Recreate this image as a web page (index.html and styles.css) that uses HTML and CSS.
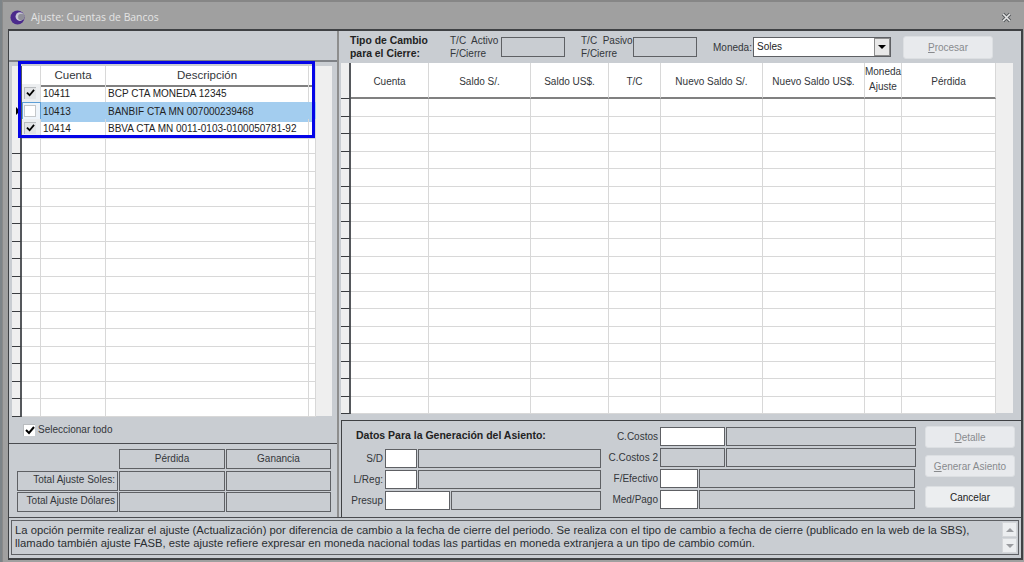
FILE: index.html
```html
<!DOCTYPE html>
<html lang="es">
<head>
    <meta charset="UTF-8">
    <meta name="viewport" content="width=device-width, initial-scale=1.0">
    <title>Ajuste: Cuentas de Bancos</title>
    <link rel="stylesheet" href="styles.css">
</head>
<body>

    <div id="window">
        <div id="titlebar">
            <svg class="app-icon" width="15" height="15" viewBox="0 0 16 16">
                <circle cx="8" cy="8" r="7.5" fill="#4b2a8c"/>
                <circle cx="10.5" cy="7" r="4.6" fill="#c9c9d6"/>
                <circle cx="12" cy="7.5" r="3.4" fill="#8f8f99"/>
            </svg>
            <span class="title-text">Ajuste: Cuentas de Bancos</span>
            <svg class="close-icon" width="11" height="11" viewBox="0 0 11 11">
                <path d="M2 2 L9 9 M9 2 L2 9" stroke="#55585c" stroke-width="3.4"/>
                <path d="M2 2 L9 9 M9 2 L2 9" stroke="#e6e6e6" stroke-width="1.6"/>
            </svg>
        </div>

        <div id="panel">
            <div id="main">
                <div id="left">
                    <div class="left-top"></div>

                    <div id="accounts">
                        <div class="lrow lhead"><span class="ind"></span><span></span><span>Cuenta</span><span>Descripción</span><span></span></div>
                        <div class="lrow"><span class="ind"></span><span class="chk-cell"><span class="chk"><svg width="9" height="8" viewBox="0 0 10 9"><path d="M1 4 L4 7 L9 1" fill="none" stroke="#000" stroke-width="2"/></svg></span></span><span class="code">10411</span><span class="desc">BCP CTA MONEDA 12345</span><span></span></div>
                        <div class="lrow selected"><span class="ind"><i class="arrow"></i></span><span class="chk-cell"><span class="chk blank"></span></span><span class="code">10413</span><span class="desc">BANBIF CTA MN 007000239468</span><span></span></div>
                        <div class="lrow"><span class="ind"></span><span class="chk-cell"><span class="chk"><svg width="9" height="8" viewBox="0 0 10 9"><path d="M1 4 L4 7 L9 1" fill="none" stroke="#000" stroke-width="2"/></svg></span></span><span class="code">10414</span><span class="desc">BBVA CTA MN 0011-0103-0100050781-92</span><span></span></div>
                        <div class="lrow"><span class="ind"></span><span></span><span></span><span></span><span></span></div>
                        <div class="lrow"><span class="ind"></span><span></span><span></span><span></span><span></span></div>
                        <div class="lrow"><span class="ind"></span><span></span><span></span><span></span><span></span></div>
                        <div class="lrow"><span class="ind"></span><span></span><span></span><span></span><span></span></div>
                        <div class="lrow"><span class="ind"></span><span></span><span></span><span></span><span></span></div>
                        <div class="lrow"><span class="ind"></span><span></span><span></span><span></span><span></span></div>
                        <div class="lrow"><span class="ind"></span><span></span><span></span><span></span><span></span></div>
                        <div class="lrow"><span class="ind"></span><span></span><span></span><span></span><span></span></div>
                        <div class="lrow"><span class="ind"></span><span></span><span></span><span></span><span></span></div>
                        <div class="lrow"><span class="ind"></span><span></span><span></span><span></span><span></span></div>
                        <div class="lrow"><span class="ind"></span><span></span><span></span><span></span><span></span></div>
                        <div class="lrow"><span class="ind"></span><span></span><span></span><span></span><span></span></div>
                        <div class="lrow"><span class="ind"></span><span></span><span></span><span></span><span></span></div>
                        <div class="lrow"><span class="ind"></span><span></span><span></span><span></span><span></span></div>
                        <div class="lrow"><span class="ind"></span><span></span><span></span><span></span><span></span></div>
                        <div class="lrow"><span class="ind"></span><span></span><span></span><span></span><span></span></div>
                        <div id="highlight"></div>
                    </div>

                    <div class="select-all">
                        <span class="chk white"><svg width="10" height="9" viewBox="0 0 10 9"><path d="M1 4 L4 7 L9 1" fill="none" stroke="#000" stroke-width="2"/></svg></span>
                        <span>Seleccionar todo</span>
                    </div>

                    <div class="totals">
                        <span></span>
                        <div class="box center">Pérdida</div>
                        <div class="box center">Ganancia</div>
                        <div class="box right-text">Total Ajuste Soles:</div>
                        <div class="box"></div>
                        <div class="box"></div>
                        <div class="box right-text">Total Ajuste Dólares</div>
                        <div class="box"></div>
                        <div class="box"></div>
                    </div>
                </div>

                <div class="split"></div>

                <div id="right">
                    <div class="toolbar">
                        <div class="tc-title">Tipo de Cambio<br>para el Cierre:</div>
                        <div class="tc-label tc-first">T/C&nbsp; Activo<br>F/Cierre</div>
                        <div class="box tc-box"></div>
                        <div class="tc-label tc-second">T/C&nbsp; Pasivo<br>F/Cierre</div>
                        <div class="box tc-box"></div>
                        <div class="moneda-label">Moneda:</div>
                        <div class="combo">
                            <span class="combo-text">Soles</span>
                            <span class="combo-btn"><i></i></span>
                        </div>
                        <button class="btn btn-off btn-proc"><u>P</u>rocesar</button>
                    </div>

                    <div id="balances">
                        <div class="rrow rhead"><span class="ind"></span><span>Cuenta</span><span>Saldo S/.</span><span>Saldo US$.</span><span>T/C</span><span>Nuevo Saldo S/.</span><span>Nuevo Saldo US$.</span><span class="two-line">Moneda<br>Ajuste</span><span>Pérdida</span></div>
                        <div class="rrow"><span class="ind"></span><span></span><span></span><span></span><span></span><span></span><span></span><span></span><span></span></div>
                        <div class="rrow"><span class="ind"></span><span></span><span></span><span></span><span></span><span></span><span></span><span></span><span></span></div>
                        <div class="rrow"><span class="ind"></span><span></span><span></span><span></span><span></span><span></span><span></span><span></span><span></span></div>
                        <div class="rrow"><span class="ind"></span><span></span><span></span><span></span><span></span><span></span><span></span><span></span><span></span></div>
                        <div class="rrow"><span class="ind"></span><span></span><span></span><span></span><span></span><span></span><span></span><span></span><span></span></div>
                        <div class="rrow"><span class="ind"></span><span></span><span></span><span></span><span></span><span></span><span></span><span></span><span></span></div>
                        <div class="rrow"><span class="ind"></span><span></span><span></span><span></span><span></span><span></span><span></span><span></span><span></span></div>
                        <div class="rrow"><span class="ind"></span><span></span><span></span><span></span><span></span><span></span><span></span><span></span><span></span></div>
                        <div class="rrow"><span class="ind"></span><span></span><span></span><span></span><span></span><span></span><span></span><span></span><span></span></div>
                        <div class="rrow"><span class="ind"></span><span></span><span></span><span></span><span></span><span></span><span></span><span></span><span></span></div>
                        <div class="rrow"><span class="ind"></span><span></span><span></span><span></span><span></span><span></span><span></span><span></span><span></span></div>
                        <div class="rrow"><span class="ind"></span><span></span><span></span><span></span><span></span><span></span><span></span><span></span><span></span></div>
                        <div class="rrow"><span class="ind"></span><span></span><span></span><span></span><span></span><span></span><span></span><span></span><span></span></div>
                        <div class="rrow"><span class="ind"></span><span></span><span></span><span></span><span></span><span></span><span></span><span></span><span></span></div>
                        <div class="rrow"><span class="ind"></span><span></span><span></span><span></span><span></span><span></span><span></span><span></span><span></span></div>
                        <div class="rrow"><span class="ind"></span><span></span><span></span><span></span><span></span><span></span><span></span><span></span><span></span></div>
                        <div class="rrow"><span class="ind"></span><span></span><span></span><span></span><span></span><span></span><span></span><span></span><span></span></div>
                        <div class="rrow"><span class="ind"></span><span></span><span></span><span></span><span></span><span></span><span></span><span></span><span></span></div>
                    </div>

                    <div class="asiento">
                        <div class="form-left">
                            <div class="form-title">Datos Para la Generación del Asiento:</div>
                            <div class="field"><label>S/D</label><div class="input w-s"></div><div class="box w-d1"></div></div>
                            <div class="field"><label>L/Reg:</label><div class="input w-s"></div><div class="box w-d1"></div></div>
                            <div class="field"><label>Presup</label><div class="input w-m"></div><div class="box w-d2"></div></div>
                        </div>
                        <div class="form-right">
                            <div class="field"><label>C.Costos</label><div class="input w-l"></div><div class="box w-d3"></div></div>
                            <div class="field"><label>C.Costos 2</label><div class="box w-l"></div><div class="box w-d3"></div></div>
                            <div class="field"><label>F/Efectivo</label><div class="input w-xs"></div><div class="box w-d4"></div></div>
                            <div class="field"><label>Med/Pago</label><div class="input w-xs"></div><div class="box w-d4"></div></div>
                        </div>
                        <div class="actions">
                            <button class="btn btn-off"><u>D</u>etalle</button>
                            <button class="btn btn-off"><u>G</u>enerar Asiento</button>
                            <button class="btn btn-cancel">Cancelar</button>
                        </div>
                    </div>
                </div>
            </div>

            <div id="help">
                <div class="help-text">La opción permite realizar el ajuste (Actualización) por diferencia de cambio a la fecha de cierre del periodo. Se realiza con el tipo de cambio a fecha de cierre (publicado en la web de la SBS),<br>llamado también ajuste FASB, este ajuste refiere expresar en moneda nacional todas las partidas en moneda extranjera a un tipo de cambio común.</div>
                <div class="help-scroll">
                    <span class="scroll-btn"><i class="up"></i></span>
                    <span class="scroll-btn"><i class="down"></i></span>
                </div>
            </div>
        </div>
    </div>

</body>
</html>
```

FILE: styles.css
```css
* {
    box-sizing: border-box;
}

body {
    margin: 0;
    height: 562px;
    overflow: hidden;
    background-color: #7d8488;
    font-family: "Liberation Sans", Arial, sans-serif;
    font-size: 10px;
    color: #33363a;
}

#window {
    height: 562px;
    margin-left: 2px;
    padding-top: 2px;
    border-top: 2px solid #868686;
    background-color: #a0a0a0;
    border-left: 1px solid #8a8a8a;
}

#titlebar {
    display: flex;
    align-items: center;
    height: 25px;
    padding: 1px 12px 0 7px;
}

.title-text {
    margin-left: 6px;
    font-family: "Open Sans", sans-serif;
    font-size: 10.4px;
    color: #e4e4e4;
}

.close-icon {
    margin-left: auto;
}

#panel {
    display: flex;
    flex-direction: column;
    width: 1015px;
    height: 531px;
    margin-left: 5px;
    border: 1px solid #3f4144;
    border-width: 2px 2px 2px 1px;
    background-color: #c9cdd2;
}

#main {
    display: flex;
    height: 486px;
}

/* left column */
#left {
    display: flex;
    flex-direction: column;
    flex-shrink: 0;
    width: 328px;
}

.left-top {
    height: 31px;
    border-bottom: 2px solid #7e8186;
}

#accounts {
    position: relative;
    width: 320px;
    height: 350px;
    margin: 4px 0 0 3px;
    background-color: #efefef;
}

.lrow {
    display: grid;
    grid-template-columns: 10px 19px 65px 203px 7px;
    width: 304px;
    height: 17.5px;
    background-color: #fff;
}

.lrow > span {
    border-right: 1px solid #d8d8d8;
    border-bottom: 1px solid #d8d8d8;
}

.lrow .ind,
.rrow .ind {
    position: relative;
    background-color: #efefef;
    border-right: 2px solid #55585c;
    border-bottom: 1px solid #3a3c40;
}

.lhead {
    height: 18px;
    font-size: 11.5px;
    line-height: 19px;
    text-align: center;
}

.lhead > span {
    border-bottom: 2px solid #808080;
}

.lrow .code,
.lrow .desc {
    padding-left: 2px;
    line-height: 19px;
    white-space: nowrap;
    color: #222;
}

.lrow .chk-cell {
    display: flex;
    align-items: center;
    padding: 0 0 2px 2px;
    background-color: #eceef0;
}

.lrow.selected > span {
    background-color: #a3cdef;
    border-color: #a3cdef;
}

.lrow.selected .ind {
    background-color: #efefef;
    border-right-color: #55585c;
    border-bottom-color: #3a3c40;
}

.lrow.selected .chk-cell {
    border: 1px solid #5d9fd6;
    padding-left: 1px;
    background-color: #eef4fa;
}

.arrow {
    position: absolute;
    top: 5px;
    left: 4px;
    border-left: 4px solid #000;
    border-top: 4px solid transparent;
    border-bottom: 4px solid transparent;
}

.chk {
    display: flex;
    justify-content: center;
    align-items: center;
    width: 12px;
    height: 12px;
    background-color: #e2e4e6;
    border-top: 1px solid #b9bcbf;
    border-left: 1px solid #b9bcbf;
}

.chk.blank {
    background-color: #fff;
    border: 1px solid #c4c7ca;
}

.chk.white {
    background-color: #fff;
}

#highlight {
    position: absolute;
    top: -5px;
    left: 6px;
    width: 297px;
    height: 77px;
    border: 3px solid #0505e8;
}

.select-all {
    display: flex;
    align-items: center;
    gap: 3px;
    height: 27px;
    padding-left: 14px;
    font-size: 10px;
}

.totals {
    display: grid;
    grid-template-columns: 101px 106px 105px;
    grid-auto-rows: 20px;
    gap: 1.5px 1px;
    padding: 5px 0 0 8px;
    border-top: 1px solid #4a4c50;
}

.box {
    border: 1px solid #5e6064;
    border-width: 1.5px;
    background-color: #c9cdd2;
}

.center {
    line-height: 17px;
    text-align: center;
}

.right-text {
    padding-right: 2px;
    line-height: 16px;
    text-align: right;
    white-space: nowrap;
}

.split {
    flex-shrink: 0;
    width: 4px;
    border-left: 2px solid #8e8e8e;
}

/* right column */
#right {
    display: flex;
    flex-direction: column;
    flex: 1;
    min-width: 0;
}

.toolbar {
    display: flex;
    align-items: center;
    height: 32px;
}

.tc-title {
    margin-left: 9px;
    width: 100px;
    font-size: 10.4px;
    font-weight: bold;
    line-height: 13px;
    color: #222;
}

.tc-label {
    width: 51px;
    line-height: 13px;
}

.tc-second {
    margin-left: 16px;
    width: 52px;
}

.tc-box {
    width: 64px;
    height: 20px;
}

.moneda-label {
    margin-left: 16px;
    width: 40px;
}

.combo {
    display: flex;
    width: 138px;
    height: 20px;
    border: 1px solid #5e6064;
    background-color: #fff;
}

.combo-text {
    flex: 1;
    padding-left: 3px;
    line-height: 18px;
    color: #222;
}

.combo-btn {
    display: flex;
    justify-content: center;
    align-items: center;
    width: 16px;
    background-color: #e8e8e8;
    border: 1px solid #8c8c8c;
}

.combo-btn i {
    border-top: 4px solid #000;
    border-left: 4px solid transparent;
    border-right: 4px solid transparent;
}

.btn {
    border: 1px solid #dcdfe2;
    border-radius: 3px;
    font-family: "Liberation Sans", Arial, sans-serif;
    font-size: 10px;
    padding: 0;
}

.btn-off {
    background-color: #e8eaed;
    color: #888a8d;
}

.btn-proc {
    width: 90px;
    height: 23px;
    margin-left: 12px;
}

.btn-cancel {
    background-color: #eceef0;
    color: #222;
}

#balances {
    width: 672px;
    height: 350px;
    background-color: #efefef;
}

.rrow {
    display: grid;
    grid-template-columns: 10px 78px 102px 78px 52px 102px 102px 37px 94px;
    width: 655px;
    height: 17.5px;
    background-color: #fff;
}

.rrow > span {
    border-right: 1px solid #d8d8d8;
    border-bottom: 1px solid #d8d8d8;
}

.rhead {
    height: 36px;
    font-size: 10px;
    text-align: center;
    line-height: 15px;
}

.rhead > span {
    display: flex;
    align-items: center;
    justify-content: center;
    padding-top: 2px;
    border-bottom: 2px solid #808080;
}

.rhead > .two-line {
    padding: 0 0 3px;
}

.asiento {
    display: flex;
    flex: 1;
    margin-top: 7px;
    border-top: 1px solid #3f4144;
    border-left: 1px solid #3f4144;
}

.form-left {
    flex-shrink: 0;
    width: 260px;
}

.form-title {
    height: 28px;
    padding: 8px 0 0 14px;
    font-size: 10.5px;
    font-weight: bold;
    color: #222;
}

.form-right {
    flex-shrink: 0;
    width: 322px;
    padding-top: 6px;
}

.field {
    display: flex;
    align-items: center;
    gap: 1px;
    height: 18.5px;
    margin-bottom: 2.5px;
}

.field label {
    flex-shrink: 0;
    width: 42px;
    padding-right: 1px;
    text-align: right;
    white-space: nowrap;
}

.form-right .field label {
    width: 57px;
}

.input {
    height: 100%;
    background-color: #fff;
    border: 1px solid #5e6064;
}

.field .box {
    height: 100%;
}

.w-s {
    width: 32px;
}

.w-m {
    width: 65px;
}

.w-l {
    width: 65px;
}

.w-xs {
    width: 38px;
}

.w-d1 {
    width: 183px;
}

.w-d2 {
    width: 150px;
}

.w-d3 {
    width: 190px;
}

.w-d4 {
    width: 216px;
}

.actions {
    display: flex;
    flex-direction: column;
    width: 90px;
    margin: 5px 0 0 1px;
}

.actions .btn {
    width: 90px;
    height: 22px;
    margin-bottom: 7px;
}

.actions .btn-cancel {
    margin-top: 2px;
}

/* help text at the bottom */
#help {
    display: flex;
    flex: 1;
    padding: 2px 2px 3px 2px;
    border-top: 1px solid #4a4c50;
}

.help-text {
    flex: 1;
    padding: 3px 0 0 3px;
    font-size: 11.25px;
    line-height: 13px;
    white-space: nowrap;
    border: 1px solid #5e6064;
    border-right: 0;
    color: #2a2d31;
}

.help-scroll {
    display: flex;
    flex-direction: column;
    justify-content: space-between;
    width: 18px;
    padding: 1px;
    border: 1px solid #5e6064;
    border-left: 0;
}

.scroll-btn {
    display: flex;
    justify-content: center;
    align-items: center;
    height: 15px;
    background-color: #eceef0;
    border: 1px solid #d5d7da;
}

.scroll-btn .up {
    border-bottom: 4px solid #9a9ca0;
    border-left: 4px solid transparent;
    border-right: 4px solid transparent;
}

.scroll-btn .down {
    border-top: 4px solid #9a9ca0;
    border-left: 4px solid transparent;
    border-right: 4px solid transparent;
}
```
